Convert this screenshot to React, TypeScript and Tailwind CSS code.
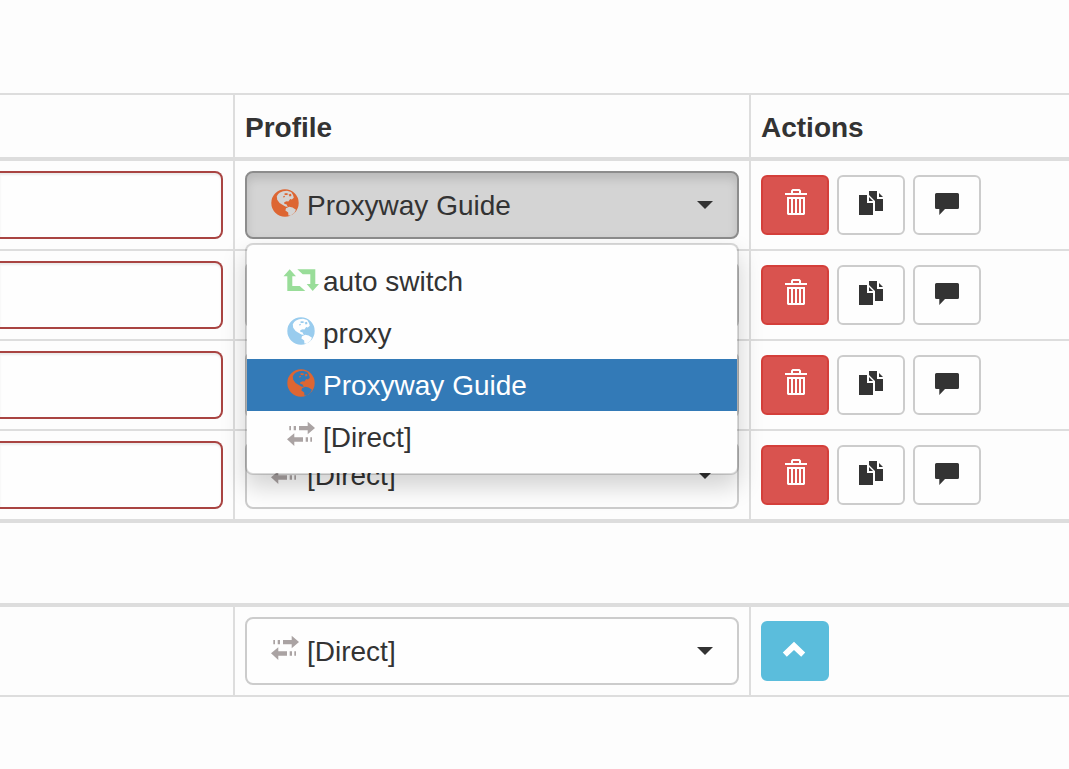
import React, { useState } from 'react';
import clsx from 'clsx';

type ProfileId = 'auto' | 'proxy' | 'guide' | 'direct';

const GlobeIcon: React.FC = () => (
  <svg width="28" height="28" viewBox="0 0 28 28" fill="currentColor" fillRule="evenodd" aria-hidden="true">
    <path d="M14 .3a13.7 13.7 0 1 0 0 27.4a13.7 13.7 0 1 0 0-27.4z M9 3.6L12 2.2L16 1.8L20.2 3L22 6L22.8 8.8L20.8 10.6L19.2 10L17.4 12.4L15.6 12.2L13.2 13.2L13.4 15L15.4 15.2L16.8 18L14.4 17.4L11 15.6L8.6 14L6.2 10.8L5.8 7.2L7.2 5z M15 19.2L18.2 17.8L21.6 18.6L25 20.8L23.4 23.8L19.8 26.4L17.4 26.6L17.2 23.6L14.4 21.4z" />
    <path d="M13.6 4.2h3v1.8h-3z M17.6 5.6l2.4-.8l.4 2.2l-1.8.4z M12 7.4l1.6-.6l.4 1.2l-1.6.6z" />
  </svg>
);

const RetweetIcon: React.FC = () => (
  <svg className="-mx-1" width="36" height="28" viewBox="0 0 36 28" fill="currentColor" aria-hidden="true">
    <path d="M6.7 4.3L13 11.3H9.3V21H16.7L22.3 26H4.3V11.3H.5z" />
    <path d="M14.3 4.3H32.3V19H36L29.7 26L23.7 19H27.3V9.3H19.7z" />
  </svg>
);

const TransferIcon: React.FC = () => (
  <svg width="28" height="28" viewBox="0 0 28 28" fill="currentColor" aria-hidden="true">
    <path d="M2.3 5H4V9.3H2.3z M6.7 5H9V9.3H6.7z M12 5H20.7V.7L28 7L20.7 13.3V9.3H12z" />
    <path d="M0 18.3L7.3 12.2V16.3H16V20.7H7.3V25z M18.7 16.3H21V20.7H18.7z M23.3 16.3H25V20.7H23.3z" />
  </svg>
);

const TrashIcon: React.FC = () => (
  <svg width="28" height="28" viewBox="0 0 28 28" fill="currentColor" fillRule="evenodd" aria-hidden="true">
    <path d="M11.5 0H18.5L20 1.5V4H26V6H4V4H10V1.5z M12 2V4H18V2z" />
    <path d="M6 8H24V25L23 26H7L6 25z M8 10V24H10V10z M12 10V24H14V10z M16 10V24H18V10z M20 10V24H22V10z" />
  </svg>
);

const DuplicateIcon: React.FC = () => (
  <svg width="28" height="28" viewBox="0 0 28 28" fill="currentColor" aria-hidden="true">
    <path d="M2 6H10V14H16V26H2z M12 8L16 12H12z" />
    <path d="M12 2H20V10H26V22H18V12L12 6z M22 4L26 8H22z" />
  </svg>
);

const CommentIcon: React.FC = () => (
  <svg width="28" height="28" viewBox="0 0 28 28" fill="currentColor" aria-hidden="true">
    <path d="M3.5 4H24.5Q26 4 26 5.5V18.5Q26 20 24.5 20H12L6.3 26V20H3.5Q2 20 2 18.5V5.5Q2 4 3.5 4z" />
  </svg>
);

const ChevronUpIcon: React.FC = () => (
  <svg width="28" height="28" viewBox="0 0 28 28" fill="currentColor" aria-hidden="true">
    <path d="M13 6.8L24.2 17.6L20.2 21.8L13 15L5.8 21.8L1.8 17.6z" />
  </svg>
);

const PROFILES: { id: ProfileId; name: string; color: string; Icon: React.FC }[] = [
  { id: 'auto', name: 'auto switch', color: 'text-[#99dd99]', Icon: RetweetIcon },
  { id: 'proxy', name: 'proxy', color: 'text-[#99ccee]', Icon: GlobeIcon },
  { id: 'guide', name: 'Proxyway Guide', color: 'text-[#dd6633]', Icon: GlobeIcon },
  { id: 'direct', name: '[Direct]', color: 'text-[#aaa3a3]', Icon: TransferIcon },
];

const ProfileLabel: React.FC<{ id: ProfileId }> = ({ id }) => {
  const { name, color, Icon } = PROFILES.find((p) => p.id === id)!;
  return (
    <span className="flex items-center gap-2">
      <span className={clsx('pb-1', color)}>
        <Icon />
      </span>
      <span className="pt-0.5">{name}</span>
    </span>
  );
};

interface ProfileSelectProps {
  value: ProfileId;
  open: boolean;
  onToggle: () => void;
  onSelect: (id: ProfileId) => void;
}

const ProfileSelect: React.FC<ProfileSelectProps> = ({ value, open, onToggle, onSelect }) => (
  <div className="relative">
    <button
      type="button"
      aria-haspopup="listbox"
      aria-expanded={open}
      onClick={onToggle}
      className={clsx(
        'flex h-[68px] w-full items-center justify-between rounded-lg border-2 px-6',
        open
          ? 'border-[#8c8c8c] bg-[#d4d4d4] shadow-[inset_0_6px_10px_rgba(0,0,0,0.125)]'
          : 'border-[#ccc] bg-[#fefefe]'
      )}
    >
      <ProfileLabel id={value} />
      <svg width="16" height="8" viewBox="0 0 16 8" fill="currentColor" aria-hidden="true">
        <path d="M0 0H16L8 8z" />
      </svg>
    </button>
    {open && (
      <ul
        role="listbox"
        className="absolute inset-x-0 top-full z-10 mt-1 rounded-lg border-2 border-black/15 bg-[#fefefe] bg-clip-padding py-2.5 shadow-[0_12px_24px_rgba(0,0,0,0.175)]"
      >
        {PROFILES.map((p) => (
          <li key={p.id} role="option" aria-selected={p.id === value}>
            <button
              type="button"
              onClick={() => onSelect(p.id)}
              className={clsx('flex h-[52px] w-full items-center px-10', p.id === value && 'bg-[#337ab7] text-white')}
            >
              <ProfileLabel id={p.id} />
            </button>
          </li>
        ))}
      </ul>
    )}
  </div>
);

interface ActionButtonProps {
  label: string;
  className: string;
  onClick?: () => void;
  children: React.ReactNode;
}

const ActionButton: React.FC<ActionButtonProps> = ({ label, className, onClick, children }) => (
  <button
    type="button"
    aria-label={label}
    onClick={onClick}
    className={clsx('flex h-[60px] w-[68px] items-center justify-center rounded-md border-2 pb-1', className)}
  >
    {children}
  </button>
);

export default function App() {
  const [rules, setRules] = useState<{ pattern: string; profile: ProfileId }[]>([
    { pattern: '', profile: 'guide' },
    { pattern: '', profile: 'direct' },
    { pattern: '', profile: 'direct' },
    { pattern: '', profile: 'direct' },
  ]);
  const [fallback, setFallback] = useState<ProfileId>('direct');
  // index of the row whose menu is open, -1 is the default row
  const [openRow, setOpenRow] = useState<number | null>(0);

  const toggle = (row: number) => setOpenRow(openRow === row ? null : row);

  const updateRule = (row: number, change: Partial<{ pattern: string; profile: ProfileId }>) => {
    setRules(rules.map((r, i) => (i === row ? { ...r, ...change } : r)));
  };

  return (
    <main className="min-h-screen bg-[#fdfdfd] pt-[93px] font-['Liberation_Sans',Arial,sans-serif] text-[28px] leading-10 text-[#333]">
      <table className="w-full table-fixed border-separate border-spacing-0">
        <colgroup>
          <col className="w-[233px]" />
          <col className="w-[516px]" />
          <col />
        </colgroup>
        <thead>
          <tr className="text-left">
            <td className="border-t-2 border-b-4 border-[#ddd]" />
            <th className="border-t-2 border-b-4 border-l-2 border-[#ddd] px-2.5 pt-[13px] pb-[9px]">Profile</th>
            <th className="border-t-2 border-b-4 border-l-2 border-[#ddd] px-2.5 pt-[13px] pb-[9px]">Actions</th>
          </tr>
        </thead>
        <tbody>
          {rules.map((rule, i) => {
            const line = i === rules.length - 1 ? 'border-b-4' : 'border-b-2';
            return (
              <tr key={i}>
                <td className={clsx('border-[#ddd] py-2.5 pr-2.5', line)}>
                  <input
                    type="text"
                    aria-label="Condition details"
                    value={rule.pattern}
                    onChange={(e) => updateRule(i, { pattern: e.target.value })}
                    className="block h-[68px] w-full rounded-r-lg border-2 border-l-0 border-[#a94442] bg-[#fefefe] px-6 shadow-[inset_0_2px_2px_rgba(0,0,0,0.075)] outline-none"
                  />
                </td>
                <td className={clsx('border-l-2 border-[#ddd] p-2.5', line)}>
                  <ProfileSelect
                    value={rule.profile}
                    open={openRow === i}
                    onToggle={() => toggle(i)}
                    onSelect={(profile) => {
                      updateRule(i, { profile });
                      setOpenRow(null);
                    }}
                  />
                </td>
                <td className={clsx('border-l-2 border-[#ddd] px-2.5', line)}>
                  <div className="flex gap-2">
                    <ActionButton
                      label="Delete"
                      className="border-[#d43f3a] bg-[#d9534f] text-white"
                      onClick={() => setRules(rules.filter((_, n) => n !== i))}
                    >
                      <TrashIcon />
                    </ActionButton>
                    <ActionButton
                      label="Clone"
                      className="border-[#ccc] bg-[#fefefe]"
                      onClick={() => setRules([...rules.slice(0, i + 1), { ...rule }, ...rules.slice(i + 1)])}
                    >
                      <DuplicateIcon />
                    </ActionButton>
                    <ActionButton label="Note" className="border-[#ccc] bg-[#fefefe]">
                      <CommentIcon />
                    </ActionButton>
                  </div>
                </td>
              </tr>
            );
          })}
          <tr>
            <td colSpan={3} className="h-20" />
          </tr>
        </tbody>
        <tbody>
          <tr>
            <td className="border-t-4 border-b-2 border-[#ddd]" />
            <td className="border-t-4 border-b-2 border-l-2 border-[#ddd] p-2.5">
              <ProfileSelect
                value={fallback}
                open={openRow === -1}
                onToggle={() => toggle(-1)}
                onSelect={(profile) => {
                  setFallback(profile);
                  setOpenRow(null);
                }}
              />
            </td>
            <td className="border-t-4 border-b-2 border-l-2 border-[#ddd] px-2.5">
              <ActionButton label="Move up" className="border-[#5bbddc] bg-[#5bbddc] text-white">
                <ChevronUpIcon />
              </ActionButton>
            </td>
          </tr>
        </tbody>
      </table>
    </main>
  );
}
